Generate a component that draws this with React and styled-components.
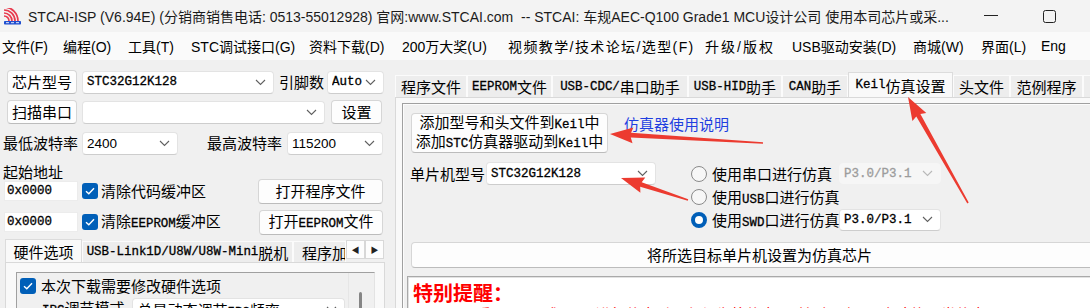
import React from "react";
import styled, { createGlobalStyle } from "styled-components";

const CJK = `"Noto Sans CJK SC", sans-serif`;
const UI = `"Liberation Sans", "Noto Sans CJK SC", sans-serif`;
const MONO = `"Liberation Mono", "Noto Sans CJK SC", monospace`;

const GlobalStyle = createGlobalStyle`
  html, body { margin: 0; padding: 0; background: #f0f0f0; }
  body { font-family: ${CJK}; }
`;

const Window = styled.div`
  position: relative;
  width: 1090px;
  height: 308px;
  overflow: hidden;
  background: #f0f0f0;
  font-family: ${CJK};
  font-size: 15px;
  color: #000;
`;

/* ---------- title + menu ---------- */

const TitleBar = styled.div`
  display: flex;
  align-items: center;
  width: 1136px;
  height: 32px;
  padding-left: 3px;
  box-sizing: border-box;
  background: #f3f3f3;
  font-family: ${UI};
  font-size: 14px;
  color: #1b1b1b;
  white-space: nowrap;
`;

const TitleText = styled.span`
  flex: 1;
  margin-left: 6px;
`;

const CtrlBtn = styled.div`
  width: 58px;
  height: 32px;
  display: flex;
  align-items: center;
  justify-content: center;
`;

const MenuBar = styled.div`
  display: flex;
  align-items: center;
  height: 28px;
  padding-left: 2px;
  background: #fafafa;
  font-family: ${UI};
  font-size: 14px;
  white-space: nowrap;
`;

const MenuItem = styled.span`
  flex: none;
  width: ${(p) => (p.$w ? p.$w + "px" : "auto")};
  letter-spacing: ${(p) => p.$ls || 0}px;
`;

/* ---------- shared controls ---------- */

const Latin = styled.span`
  font-family: "Liberation Mono", monospace;
  font-size: 0.83em;
  -webkit-text-stroke: 0.3px currentColor;
`;

const Txt = ({ children }) =>
  String(children)
    .split(/([\x21-\x7E]+)/)
    .map((s, i) => (/^[\x21-\x7E]+$/.test(s) ? <Latin key={i}>{s}</Latin> : s));

const Row = styled.div`
  display: flex;
  align-items: ${(p) => p.$align || "center"};
  height: ${(p) => p.$h}px;
  margin-top: ${(p) => p.$mt || 0}px;
  padding-left: ${(p) => p.$pl || 0}px;
  padding-right: ${(p) => p.$pr || 0}px;
  white-space: nowrap;
`;

const Label = styled.span`
  flex: none;
  margin-left: ${(p) => p.$ml || 0}px;
  line-height: ${(p) => p.$lh || 20}px;
`;

const Button = styled.div`
  box-sizing: border-box;
  flex: none;
  display: flex;
  flex-direction: column;
  align-items: center;
  justify-content: center;
  width: ${(p) => p.$w}px;
  height: ${(p) => p.$h || 24}px;
  margin-left: ${(p) => (p.$auto ? "auto" : (p.$ml || 0) + "px")};
  background: #fdfdfd;
  border: 1px solid #d6d6d6;
  border-bottom-color: #bcbcbc;
  border-radius: 4px;
  line-height: 16px;
  white-space: nowrap;
`;

const ComboBox = styled.div`
  box-sizing: border-box;
  flex: none;
  display: flex;
  align-items: center;
  width: ${(p) => p.$w}px;
  height: ${(p) => p.$h || 23}px;
  margin-left: ${(p) => p.$ml || 0}px;
  padding: 0 7px 0 4px;
  background: ${(p) => (p.$disabled ? "#f6f6f6" : "#fff")};
  border: 1px solid ${(p) => (p.$disabled ? "#f6f6f6" : "#e3e3e3")};
  border-bottom-color: ${(p) => (p.$disabled ? "#f6f6f6" : "#cdcdcd")};
  border-radius: 4px;
  color: ${(p) => (p.$disabled ? "#9c9c9c" : "#000")};
`;

const ComboValue = styled.span`
  flex: 1;
  overflow: hidden;
  white-space: nowrap;
  font-family: ${(p) => (p.$mono ? MONO : p.$cjk ? CJK : UI)};
  font-size: ${(p) => (p.$mono ? "12.5px" : p.$cjk ? "15px" : "13.5px")};
  -webkit-text-stroke: ${(p) => (p.$mono ? "0.3px" : "0")} currentColor;
`;

const Chevron = ({ color = "#606060" }) => (
  <svg width="11" height="7" viewBox="0 0 11 7">
    <polyline points="1,1 5.5,5.5 10,1" fill="none" stroke={color} strokeWidth="1.1" />
  </svg>
);

const Combo = ({ w, h, ml, mono, cjk, disabled, children }) => (
  <ComboBox $w={w} $h={h} $ml={ml} $disabled={disabled}>
    <ComboValue $mono={mono} $cjk={cjk}>
      {cjk ? <Txt>{children}</Txt> : children}
    </ComboValue>
    <Chevron color={disabled ? "#b8b8b8" : "#606060"} />
  </ComboBox>
);

const Input = styled.div`
  box-sizing: border-box;
  flex: none;
  width: ${(p) => p.$w}px;
  height: 20px;
  padding-left: 2px;
  background: #fff;
  border: 1px solid #ececec;
  font-family: ${MONO};
  font-size: 12.5px;
  line-height: 18px;
  -webkit-text-stroke: 0.3px currentColor;
`;

const CheckBox = styled.span`
  flex: none;
  display: inline-flex;
  align-items: center;
  justify-content: center;
  width: 16px;
  height: 16px;
  margin-left: ${(p) => p.$ml || 0}px;
  margin-right: ${(p) => p.$mr || 3}px;
  border-radius: 3px;
  background: #005fb8;
`;

const Check = ({ ml, mr }) => (
  <CheckBox $ml={ml} $mr={mr}>
    <svg width="10" height="8" viewBox="0 0 10 8">
      <polyline points="1,4.2 3.8,6.8 9,1.2" fill="none" stroke="#fff" strokeWidth="1.4" />
    </svg>
  </CheckBox>
);

const RadioDot = styled.span`
  box-sizing: border-box;
  flex: none;
  width: 16px;
  height: 16px;
  border-radius: 50%;
  border: ${(p) => (p.$on ? "4.5px solid #005fb8" : "1px solid #8a8a8a")};
  background: ${(p) => (p.$on ? "#fff" : "#f7f7f7")};
`;

/* ---------- tabs ---------- */

const TabStrip = styled.div`
  display: flex;
  align-items: flex-end;
  height: ${(p) => p.$h}px;
  margin-top: ${(p) => p.$mt || 0}px;
  padding-left: ${(p) => p.$pl || 0}px;
`;

const Tab = styled.div`
  box-sizing: border-box;
  flex: none;
  display: flex;
  align-items: center;
  justify-content: ${(p) => (p.$left ? "flex-start" : "center")};
  overflow: hidden;
  width: ${(p) => p.$w}px;
  height: ${(p) => (p.$active ? p.$h + 3 : p.$h)}px;
  padding-left: ${(p) => (p.$left ? 8 : 0)}px;
  background: ${(p) => (p.$active ? "#f9f9f9" : "#ededed")};
  border: 1px solid ${(p) => (p.$active ? "#dcdcdc" : "#fbfbfb")};
  border-bottom: none;
  white-space: nowrap;
`;

const ScrollArrow = styled.div`
  box-sizing: border-box;
  flex: none;
  display: flex;
  align-items: center;
  justify-content: center;
  width: 19px;
  height: 19px;
  margin-bottom: 3px;
  background: #fdfdfd;
  border: 1px solid #d8d8d8;
  font-size: 8px;
  color: #222;
`;

/* ---------- layout ---------- */

const Body = styled.div`
  display: flex;
`;

const Left = styled.div`
  flex: none;
  width: 395px;
  padding-top: 10px;
`;

const Right = styled.div`
  flex: none;
  width: 730px;
`;

const LeftPage = styled.div`
  box-sizing: border-box;
  width: 380px;
  height: 60px;
  margin-left: 5px;
  padding: 9px 0 0 10px;
  background: #f9f9f9;
  border: 1px solid #d9d9d9;
  border-bottom: none;
`;

const GroupBox = styled.div`
  display: flex;
  width: 357px;
  height: 50px;
  background: #f0f0f0;
  border-top: 1px solid #a0a0a0;
  border-left: 1px solid #a0a0a0;
  border-right: 1px solid #e3e3e3;
`;

const GroupContent = styled.div`
  flex: 1;
  padding: 4px 0 0 3px;
`;

const ScrollTrack = styled.div`
  flex: none;
  width: 25px;
  padding-top: 19px;
  border-left: 1px solid #e6e6e6;
  display: flex;
  justify-content: center;
`;

const Thumb = styled.div`
  width: 3px;
  height: 30px;
  margin-left: -2px;
  border-radius: 2px;
  background: #858585;
`;

const TabPage = styled.div`
  box-sizing: border-box;
  height: 220px;
  padding: 5px 0 0 6px;
  background: #f9f9f9;
  border: 1px solid #d9d9d9;
`;

const Frame = styled.div`
  height: 220px;
  padding: 9px 0 0 7px;
  background: #f0f0f0;
  border-top: 1px solid #a0a0a0;
  border-left: 1px solid #a0a0a0;
  box-shadow: inset 1px 1px 0 #fcfcfc;
`;

const Link = styled.span`
  align-self: flex-start;
  margin: 1px 0 0 16px;
  color: #1f3fe0;
  line-height: 20px;
`;

const RadioGroup = styled.div`
  display: flex;
  flex-direction: column;
  margin-left: 35px;
`;

const RadioLabel = styled.span`
  flex: none;
  width: ${(p) => p.$w}px;
  margin-left: 5px;
`;

const Notes = styled.div`
  width: 720px;
  height: 40px;
  margin: 8px 0 0 -3px;
  padding: 4px 0 0 5px;
  background: #fff;
  border-top: 1px solid #a9a9a9;
  border-left: 1px solid #a9a9a9;
  box-shadow: inset 1px 1px 0 #e2e2e2;
  color: #ff0000;
  white-space: nowrap;
`;

const NoteTitle = styled.div`
  font-size: 20px;
  font-weight: 700;
  line-height: 24px;
`;

const NoteLine = styled.div`
  margin-top: -1px;
  padding-left: 63px;
  font-size: 15px;
  line-height: 20px;
`;

const Overlay = styled.svg`
  position: absolute;
  left: 0;
  top: 0;
  pointer-events: none;
`;

/* ---------- data ---------- */

// [label, start x in the menu bar, letter spacing]
const menus = [
  ["文件(F)", 2],
  ["编程(O)", 63],
  ["工具(T)", 128],
  ["STC调试接口(G)", 191],
  ["资料下载(D)", 309],
  ["200万大奖(U)", 402],
  ["视频教学/技术论坛/选型(F)", 508, 1.4],
  ["升级/版权", 705, 2],
  ["USB驱动安装(D)", 792],
  ["商城(W)", 913],
  ["界面(L)", 981],
  ["Eng", 1041],
];

const rightTabs = [
  ["程序文件", 72],
  ["EEPROM文件", 85],
  ["USB-CDC/串口助手", 136],
  ["USB-HID助手", 94],
  ["CAN助手", 66],
  ["Keil仿真设置", 105, true],
  ["头文件", 57],
  ["范例程序", 73],
  ["选型/价格/样品", 120],
];

const arrows = [
  [[763, 143], [610, 134]],
  [[968, 203], [908, 97]],
  [[688, 200], [621, 178]],
];

function arrowPoints([x1, y1], [x2, y2]) {
  const dx = x2 - x1;
  const dy = y2 - y1;
  const len = Math.hypot(dx, dy);
  const ux = dx / len;
  const uy = dy / len;
  const nx = -uy;
  const ny = ux;
  const head = 21;
  const bx = x2 - ux * head;
  const by = y2 - uy * head;
  const p = (x, y, w) => `${(x + nx * w).toFixed(1)},${(y + ny * w).toFixed(1)}`;
  return [
    p(x1, y1, 0.8),
    p(bx, by, 2.4),
    p(bx - ux * 2, by - uy * 2, 8),
    p(x2, y2, 0),
    p(bx - ux * 2, by - uy * 2, -8),
    p(bx, by, -2.4),
    p(x1, y1, -0.8),
  ].join(" ");
}

const Logo = () => (
  <svg width="19" height="17" viewBox="0 0 19 17">
    {[5, 8, 11, 14].map((r) => (
      <path key={r} d={`M1 ${13 - r} A${r} ${r} 0 0 1 ${1 + r} 13`} fill="none" stroke="#e83a4e" strokeWidth="1.7" />
    ))}
    <rect x="1" y="13" width="17" height="3.5" rx="0.8" fill="#1f4fd0" />
    <path d="M3 14.7h3M8 14.7h3M13 14.7h3" stroke="#fff" strokeWidth="0.9" />
  </svg>
);

export default function App() {
  return (
    <>
      <GlobalStyle />
      <Window>
        <TitleBar>
          <Logo />
          <TitleText>
            STCAI-ISP (V6.94E) (分销商销售电话: 0513-55012928) 官网:www.STCAI.com&nbsp; -- STCAI: 车规AEC-Q100 Grade1
            MCU设计公司 使用本司芯片或采...
          </TitleText>
          <CtrlBtn>
            <svg width="14" height="2" viewBox="0 0 14 2">
              <rect width="14" height="1" fill="#222" />
            </svg>
          </CtrlBtn>
          <CtrlBtn>
            <svg width="13" height="13" viewBox="0 0 13 13">
              <rect x="0.5" y="0.5" width="12" height="12" rx="2" fill="none" stroke="#222" />
            </svg>
          </CtrlBtn>
          <CtrlBtn>
            <svg width="12" height="12" viewBox="0 0 12 12">
              <path d="M1 1L11 11M11 1L1 11" stroke="#222" />
            </svg>
          </CtrlBtn>
        </TitleBar>

        <MenuBar>
          {menus.map(([m, x, ls], i) => {
            const next = menus[i + 1];
            return (
              <MenuItem key={m} $w={next ? next[1] - x : 0} $ls={ls}>
                {m}
              </MenuItem>
            );
          })}
        </MenuBar>

        <Body>
          <Left>
            <Row $h={24} $pl={7}>
              <Button $w={70}>芯片型号</Button>
              <Combo w={192} ml={5} mono>
                STC32G12K128
              </Combo>
              <Label $ml={5}>引脚数</Label>
              <Combo w={57} ml={3} mono>
                Auto
              </Combo>
            </Row>
            <Row $h={24} $pl={7} $mt={6}>
              <Button $w={70}>扫描串口</Button>
              <Combo w={243} ml={5} />
              <Button $w={51} $ml={6}>
                设置
              </Button>
            </Row>
            <Row $h={24} $pl={3} $mt={7}>
              <Label>最低波特率</Label>
              <Combo w={96} ml={4}>
                2400
              </Combo>
              <Label $ml={29}>最高波特率</Label>
              <Combo w={96} ml={5}>
                115200
              </Combo>
            </Row>
            <Row $h={15} $pl={3} $mt={8} $align="flex-start">
              <Label $lh={18}>起始地址</Label>
            </Row>
            <Row $h={26} $pl={4} $pr={12}>
              <Input $w={74}>0x0000</Input>
              <Check ml={4} />
              <Label>清除代码缓冲区</Label>
              <Button $w={125} $h={25} $auto>
                打开程序文件
              </Button>
            </Row>
            <Row $h={26} $pl={4} $pr={12} $mt={5}>
              <Input $w={74}>0x0000</Input>
              <Check ml={4} />
              <Label>
                <Txt>清除EEPROM缓冲区</Txt>
              </Label>
              <Button $w={124} $h={25} $auto>
                <span>
                  打开<Txt>EEPROM</Txt>文件
                </span>
              </Button>
            </Row>
            <TabStrip $h={23} $mt={4} $pl={5}>
              <Tab $w={77} $h={20} $active>
                硬件选项
              </Tab>
              <Tab $w={211} $h={21}>
                <Txt>USB-Link1D/U8W/U8W-Mini脱机</Txt>
              </Tab>
              <Tab $w={53} $h={21} $left>
                程序加密后传输
              </Tab>
              <ScrollArrow>◀</ScrollArrow>
              <ScrollArrow>▶</ScrollArrow>
            </TabStrip>
            <LeftPage>
              <GroupBox>
                <GroupContent>
                  <Row $h={18}>
                    <Check ml={0} mr={5} />
                    <Label>本次下载需要修改硬件选项</Label>
                  </Row>
                  <Row $h={23} $mt={3} $pl={22}>
                    <Label>
                      <Txt>IRC调节模式</Txt>
                    </Label>
                    <Combo w={213} ml={8} cjk>
                      总是动态调节IRC频率
                    </Combo>
                  </Row>
                </GroupContent>
                <ScrollTrack>
                  <Thumb />
                </ScrollTrack>
              </GroupBox>
            </LeftPage>
          </Left>

          <Right>
            <TabStrip $h={27} $mt={10}>
              {rightTabs.map(([t, w, active]) => (
                <Tab key={t} $w={w} $h={22} $active={active}>
                  <Txt>{t}</Txt>
                </Tab>
              ))}
            </TabStrip>
            <TabPage>
              <Frame>
                <Row $h={40}>
                  <Button $w={197} $h={40} $ml={1}>
                    <span>
                      <Txt>添加型号和头文件到Keil中</Txt>
                    </span>
                    <span>
                      <Txt>添加STC仿真器驱动到Keil中</Txt>
                    </span>
                  </Button>
                  <Link>仿真器使用说明</Link>
                </Row>
                <Row $h={69} $mt={9} $align="flex-start">
                  <Label $lh={23}>单片机型号</Label>
                  <Combo w={170} ml={1} mono>
                    STC32G12K128
                  </Combo>
                  <RadioGroup>
                    <Row $h={23}>
                      <RadioDot />
                      <RadioLabel $w={127}>使用串口进行仿真</RadioLabel>
                      <Combo w={102} h={21} mono disabled>
                        P3.0/P3.1
                      </Combo>
                    </Row>
                    <Row $h={23}>
                      <RadioDot />
                      <RadioLabel $w={127}>
                        <Txt>使用USB口进行仿真</Txt>
                      </RadioLabel>
                    </Row>
                    <Row $h={23}>
                      <RadioDot $on />
                      <RadioLabel $w={127}>
                        <Txt>使用SWD口进行仿真</Txt>
                      </RadioLabel>
                      <Combo w={102} h={22} mono>
                        P3.0/P3.1
                      </Combo>
                    </Row>
                  </RadioGroup>
                </Row>
                <Row $h={26} $mt={11}>
                  <Button $w={697} $h={26} $ml={1}>
                    将所选目标单片机设置为仿真芯片
                  </Button>
                </Row>
                <Notes>
                  <NoteTitle>特别提醒：</NoteTitle>
                  <NoteLine>
                    <Txt>采用USB口或SWD口进行仿真时，必须先将仿真驱动添加到Keil中才能正常仿真</Txt>
                  </NoteLine>
                </Notes>
              </Frame>
            </TabPage>
          </Right>
        </Body>

        <Overlay width="1090" height="308" viewBox="0 0 1090 308">
          {arrows.map(([a, b], i) => (
            <polygon key={i} points={arrowPoints(a, b)} fill="#ec3b30" />
          ))}
        </Overlay>
      </Window>
    </>
  );
}
